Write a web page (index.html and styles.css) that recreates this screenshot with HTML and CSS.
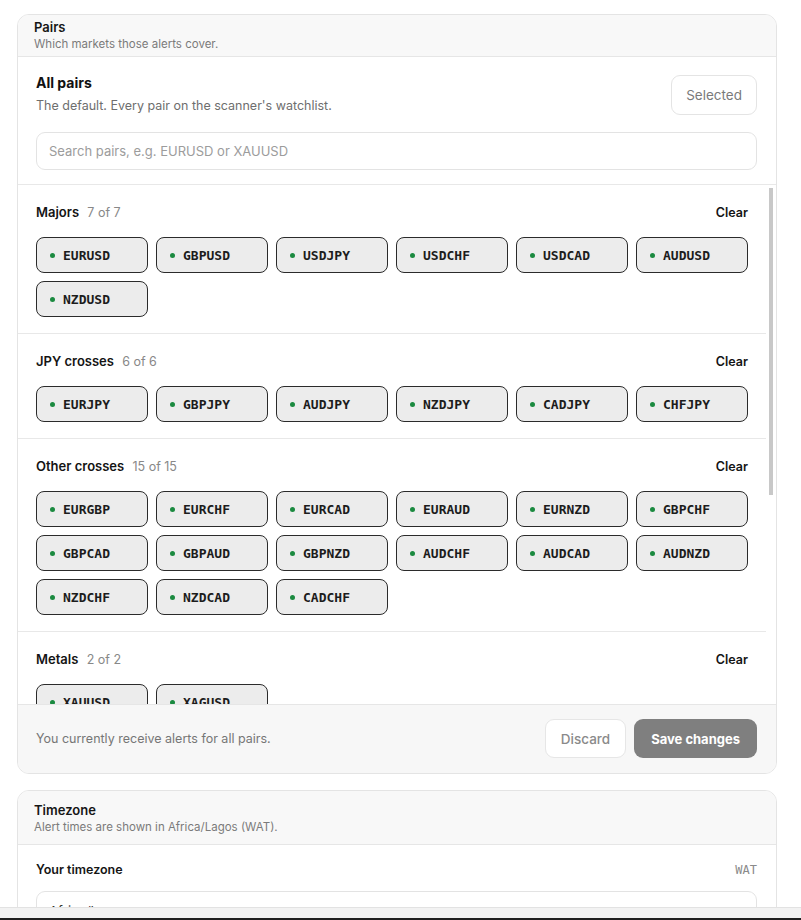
FILE: index.html
```html
<!DOCTYPE html>
<html lang="en">
<head>
<meta charset="utf-8">
<title>Alert settings</title>
<link rel="stylesheet" href="styles.css">
</head>
<body>
<main class="page">

  <section class="card">
    <header class="card-head">
      <div class="card-title">Pairs</div>
      <div class="card-sub">Which markets those alerts cover.</div>
    </header>

    <div class="all-pairs">
      <div class="all-row">
        <div>
          <div class="all-title">All pairs</div>
          <div class="all-sub">The default. Every pair on the scanner's watchlist.</div>
        </div>
        <button class="btn-selected" type="button">Selected</button>
      </div>
      <input class="search" type="text" placeholder="Search pairs, e.g. EURUSD or XAUUSD">
    </div>

    <div class="pair-pane">
      <div class="pair-list">
        <div class="group">
          <div class="group-head">
            <div class="group-name">Majors <span class="group-count">7 of 7</span></div>
            <button class="btn-clear" type="button">Clear</button>
          </div>
          <div class="pills">
            <span class="pill"><i class="dot"></i>EURUSD</span>
            <span class="pill"><i class="dot"></i>GBPUSD</span>
            <span class="pill"><i class="dot"></i>USDJPY</span>
            <span class="pill"><i class="dot"></i>USDCHF</span>
            <span class="pill"><i class="dot"></i>USDCAD</span>
            <span class="pill"><i class="dot"></i>AUDUSD</span>
            <span class="pill"><i class="dot"></i>NZDUSD</span>
          </div>
        </div>

        <div class="group">
          <div class="group-head">
            <div class="group-name">JPY crosses <span class="group-count">6 of 6</span></div>
            <button class="btn-clear" type="button">Clear</button>
          </div>
          <div class="pills">
            <span class="pill"><i class="dot"></i>EURJPY</span>
            <span class="pill"><i class="dot"></i>GBPJPY</span>
            <span class="pill"><i class="dot"></i>AUDJPY</span>
            <span class="pill"><i class="dot"></i>NZDJPY</span>
            <span class="pill"><i class="dot"></i>CADJPY</span>
            <span class="pill"><i class="dot"></i>CHFJPY</span>
          </div>
        </div>

        <div class="group">
          <div class="group-head">
            <div class="group-name">Other crosses <span class="group-count">15 of 15</span></div>
            <button class="btn-clear" type="button">Clear</button>
          </div>
          <div class="pills">
            <span class="pill"><i class="dot"></i>EURGBP</span>
            <span class="pill"><i class="dot"></i>EURCHF</span>
            <span class="pill"><i class="dot"></i>EURCAD</span>
            <span class="pill"><i class="dot"></i>EURAUD</span>
            <span class="pill"><i class="dot"></i>EURNZD</span>
            <span class="pill"><i class="dot"></i>GBPCHF</span>
            <span class="pill"><i class="dot"></i>GBPCAD</span>
            <span class="pill"><i class="dot"></i>GBPAUD</span>
            <span class="pill"><i class="dot"></i>GBPNZD</span>
            <span class="pill"><i class="dot"></i>AUDCHF</span>
            <span class="pill"><i class="dot"></i>AUDCAD</span>
            <span class="pill"><i class="dot"></i>AUDNZD</span>
            <span class="pill"><i class="dot"></i>NZDCHF</span>
            <span class="pill"><i class="dot"></i>NZDCAD</span>
            <span class="pill"><i class="dot"></i>CADCHF</span>
          </div>
        </div>

        <div class="group">
          <div class="group-head">
            <div class="group-name">Metals <span class="group-count">2 of 2</span></div>
            <button class="btn-clear" type="button">Clear</button>
          </div>
          <div class="pills">
            <span class="pill"><i class="dot"></i>XAUUSD</span>
            <span class="pill"><i class="dot"></i>XAGUSD</span>
          </div>
        </div>

        <div class="group">
          <div class="group-head">
            <div class="group-name">Indices <span class="group-count">4 of 4</span></div>
            <button class="btn-clear" type="button">Clear</button>
          </div>
          <div class="pills">
            <span class="pill"><i class="dot"></i>US30</span>
            <span class="pill"><i class="dot"></i>NAS100</span>
            <span class="pill"><i class="dot"></i>SPX500</span>
            <span class="pill"><i class="dot"></i>GER40</span>
          </div>
        </div>
      </div>

      <!-- scroll position indicator for the pair list -->
      <div class="scroll-rail"><div class="scroll-thumb"></div></div>
    </div>

    <footer class="card-foot">
      <div class="foot-note">You currently receive alerts for all pairs.</div>
      <div class="foot-actions">
        <button class="btn-discard" type="button">Discard</button>
        <button class="btn-save" type="button">Save changes</button>
      </div>
    </footer>
  </section>

  <section class="card card-tz">
    <header class="card-head card-head-tz">
      <div class="card-title">Timezone</div>
      <div class="card-sub">Alert times are shown in Africa/Lagos (WAT).</div>
    </header>
    <div class="tz-body">
      <div class="tz-row">
        <div class="tz-label">Your timezone</div>
        <div class="tz-code">WAT</div>
      </div>
      <input class="tz-input" type="text" value="Africa/Lagos">
    </div>
  </section>

</main>
<div class="bottom-bar"></div>
</body>
</html>
```

FILE: styles.css
```css
html, body {
  margin: 0;
  padding: 0;
  background: #ffffff;
  overflow: hidden;
  height: 100%;
}

body {
  font-family: Inter, "Noto Sans", "Liberation Sans", sans-serif;
  color: #151515;
}

.page {
  width: 760px;
  padding: 14px 0 0 17px;
}

/* cards */
.card {
  border: 1px solid #e4e4e4;
  border-radius: 12px;
  background: #ffffff;
  overflow: hidden;
}

.card + .card {
  margin-top: 16px;
}

.card-head {
  background: #f8f8f8;
  border-bottom: 1px solid #e6e6e6;
  padding: 3px 16px 4px;
}

.card-head-tz {
  padding: 10px 16px 9px;
}

.card-title {
  font-size: 13px;
  line-height: 18px;
  font-weight: 600;
  color: #161616;
}

.card-sub {
  font-size: 11.5px;
  line-height: 16px;
  color: #7b7b7b;
}

/* all pairs block */
.all-pairs {
  padding: 16px 19px 14px 18px;
  border-bottom: 1px solid #e8e8e8;
}

.all-row {
  display: flex;
  align-items: center;
  justify-content: space-between;
}

.all-title {
  font-size: 14px;
  line-height: 20px;
  font-weight: 700;
  color: #111111;
}

.all-sub {
  margin-top: 4px;
  font-size: 12.5px;
  line-height: 18px;
  color: #6e6e6e;
}

.btn-selected {
  height: 40px;
  padding: 0 14px;
  margin-top: 2px;
  border: 1px solid #e4e4e4;
  border-radius: 9px;
  background: #ffffff;
  font-family: inherit;
  font-size: 13.5px;
  color: #7a7a7a;
}

.search {
  display: block;
  box-sizing: border-box;
  width: 100%;
  height: 38px;
  margin-top: 17px;
  padding: 0 12px;
  border: 1px solid #e3e3e3;
  border-radius: 9px;
  font-family: inherit;
  font-size: 13px;
  color: #222222;
  outline: none;
}

.search::placeholder {
  color: #9c9c9c;
}

/* scrolling pair groups */
.pair-pane {
  display: flex;
  height: 519px;
}

.pair-list {
  flex: 1;
  min-width: 0;
  overflow: hidden;
}

.scroll-rail {
  width: 4px;
  padding: 3px 3px 0;
  background: #ffffff;
}

.scroll-thumb {
  height: 307px;
  background: #c8c8c8;
}

.group {
  padding: 13px 18px 16px 18px;
  border-bottom: 1px solid #e8e8e8;
}

.group-head {
  display: flex;
  align-items: center;
  justify-content: space-between;
  height: 28px;
  margin-bottom: 11px;
}

.group-name {
  font-size: 13px;
  font-weight: 600;
  color: #141414;
}

.group-count {
  margin-left: 5px;
  font-size: 12.5px;
  font-weight: 400;
  color: #888888;
}

.btn-clear {
  height: 28px;
  padding: 0;
  border: none;
  background: transparent;
  font-family: inherit;
  font-size: 12.5px;
  font-weight: 600;
  color: #141414;
}

.pills {
  display: grid;
  grid-template-columns: repeat(6, 1fr);
  gap: 8px;
}

.pill {
  display: flex;
  align-items: center;
  box-sizing: border-box;
  height: 36px;
  padding-left: 13px;
  border: 1px solid #2b2b2b;
  border-radius: 8px;
  background: #ececec;
  font-family: "DejaVu Sans Mono", "Liberation Mono", monospace;
  font-size: 13px;
  font-weight: 700;
  color: #1c1c1c;
}

.dot {
  width: 5px;
  height: 5px;
  margin-right: 8px;
  border-radius: 50%;
  background: #1b8a40;
}

/* footer */
.card-foot {
  display: flex;
  align-items: center;
  justify-content: space-between;
  padding: 14px 19px 15px 18px;
  border-top: 1px solid #e6e6e6;
  background: #f7f7f7;
}

.foot-note {
  font-size: 12.5px;
  color: #767676;
}

.foot-actions {
  display: flex;
  gap: 8px;
}

.btn-discard {
  height: 39px;
  padding: 0 15px;
  border: 1px solid #e6e6e6;
  border-radius: 9px;
  background: #ffffff;
  font-family: inherit;
  font-size: 13.5px;
  font-weight: 500;
  color: #8a8a8a;
}

.btn-save {
  height: 39px;
  padding: 0 17px;
  border: none;
  border-radius: 9px;
  background: #7f7f7f;
  font-family: inherit;
  font-size: 13px;
  font-weight: 700;
  color: #ffffff;
}

/* timezone card */
.tz-body {
  padding: 16px 19px 16px 18px;
}

.tz-row {
  display: flex;
  align-items: center;
  justify-content: space-between;
  line-height: 18px;
}

.tz-label {
  font-size: 12.5px;
  font-weight: 600;
  color: #151515;
}

.tz-code {
  font-family: "DejaVu Sans Mono", "Liberation Mono", monospace;
  font-size: 12px;
  color: #8a8a8a;
}

.tz-input {
  display: block;
  box-sizing: border-box;
  width: 100%;
  height: 40px;
  margin-top: 12px;
  padding: 0 12px;
  border: 1px solid #e3e3e3;
  border-radius: 9px;
  font-family: inherit;
  font-size: 13px;
  color: #333333;
  outline: none;
}

/* window chrome strip pinned along the bottom edge */
.bottom-bar {
  position: fixed;
  left: 0;
  right: 0;
  bottom: 0;
  height: 13px;
  box-sizing: border-box;
  border-top: 1px solid #e2e2e2;
  background: linear-gradient(#f2f2f2 0, #f2f2f2 10px, #1f1f1f 10px);
}
```
